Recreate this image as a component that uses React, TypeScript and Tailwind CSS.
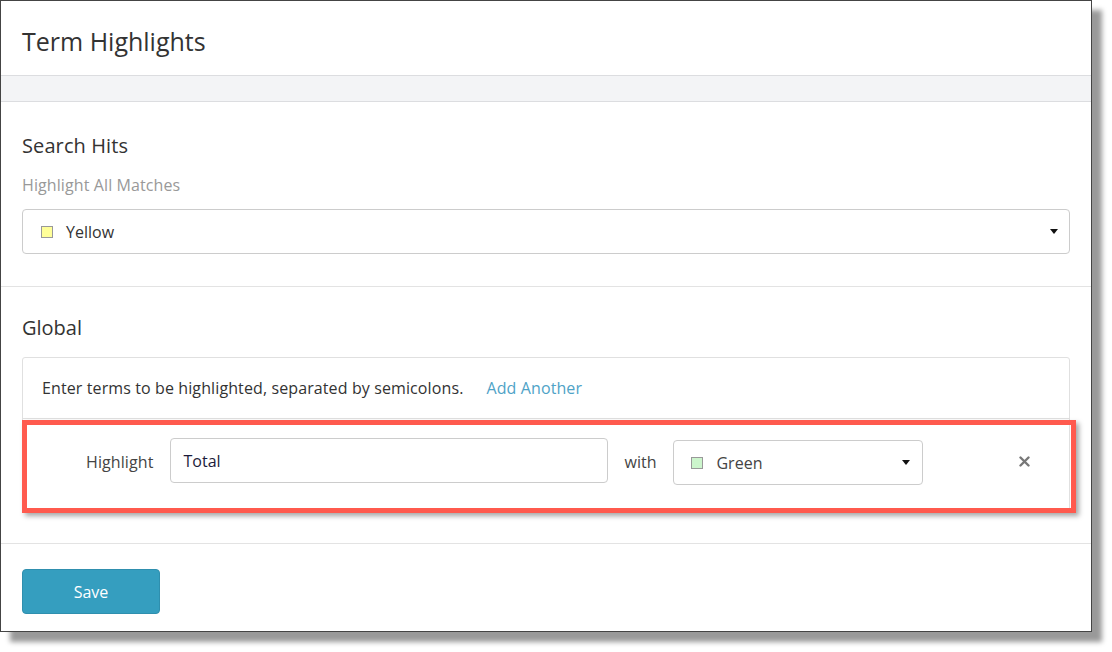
import React from 'react';

const Caret = () => (
  <svg width="8" height="5" viewBox="0 0 8 5" className="shrink-0">
    <path d="M0 0 H8 L4 5 Z" fill="#111" />
  </svg>
);

const Swatch = ({ color }: { color: string }) => (
  <span className="inline-block w-[12px] h-[12px] border border-[#999] shrink-0" style={{ background: color }} />
);

const App: React.FC = () => {
  return (
    <div className="w-[1112px] h-[652px] bg-white text-[#333]" style={{ fontFamily: '"Open Sans", "Noto Sans", sans-serif' }}>
      <div className="w-[1092px] h-[632px] border border-[#444] bg-white shadow-[10px_10px_5px_rgba(0,0,0,0.4)] flex flex-col">
        <div className="h-[75px] border-b border-[#dcdde0] flex items-center px-[21px] pt-[5px]">
          <h1 className="text-[25px] leading-[32px] text-[#333]">Term Highlights</h1>
        </div>
        <div className="h-[26px] bg-[#f3f4f6] border-b border-[#dcdde0]" />

        <div className="px-[21px] pt-[30px] pb-[32px] border-b border-[#e3e3e3]">
          <h2 className="text-[20px] leading-[28px] tracking-[0.1px]">Search Hits</h2>
          <p className="text-[16px] leading-[24px] text-[#999] mt-[13px] tracking-[0.1px]">Highlight All Matches</p>
          <div className="mt-[12px] h-[45px] border border-[#ccc] rounded-[4px] flex items-center pl-[18px] pr-[11px] gap-[13px]">
            <Swatch color="#ffff99" />
            <span className="text-[16px] flex-1">Yellow</span>
            <Caret />
          </div>
        </div>

        <div className="px-[21px] pt-[27px] pb-[30px] border-b border-[#e3e3e3]">
          <h2 className="text-[20px] leading-[28px]">Global</h2>
          <div className="mt-[15px] border border-[#e0e0e0] rounded-[3px] relative">
            <div className="h-[61px] flex items-center px-[19px] border-b border-[#e0e0e0] text-[16px] tracking-[0.11px]">
              <span>Enter terms to be highlighted, separated by semicolons.</span>
              <span className="ml-[23px] text-[#4fa3c7]">Add Another</span>
            </div>
            <div className="h-[93px] flex items-center pl-[63px] pr-[36px] pb-[8px] text-[16px]">
              <span className="text-[#444] tracking-[0.1px]">Highlight</span>
              <div className="ml-[16px] w-[438px] h-[45px] border border-[#ccc] rounded-[4px] flex items-center px-[13px] -mt-[2px]">
                <span className="text-[#1c1c3a]">Total</span>
              </div>
              <span className="ml-[17px] text-[#444]">with</span>
              <div className="ml-[17px] w-[250px] h-[45px] border border-[#ccc] rounded-[4px] flex items-center pl-[17px] pr-[12px] gap-[13px] mt-[2px]">
                <Swatch color="#ccf5cc" />
                <span className="flex-1 text-[#444]">Green</span>
                <Caret />
              </div>
              <div className="flex-1" />
              <svg width="11" height="11" viewBox="0 0 11 11" className="mr-[3px]">
                <path d="M1.5 1.5 L9.5 9.5 M9.5 1.5 L1.5 9.5" stroke="#777" strokeWidth="2.4" strokeLinecap="round" />
              </svg>
            </div>
            <div className="absolute left-[-1px] right-[-7px] top-[62px] h-[93px] border-[5px] border-[#ff5a4e] shadow-[3px_3px_5px_rgba(0,0,0,0.35)] pointer-events-none" />
          </div>
        </div>

        <div className="px-[21px] pt-[25px]">
          <button className="w-[138px] h-[45px] bg-[#359ebf] border border-[#2f8fae] rounded-[4px] text-white text-[16px]">Save</button>
        </div>
      </div>
    </div>
  );
};

export default App;
